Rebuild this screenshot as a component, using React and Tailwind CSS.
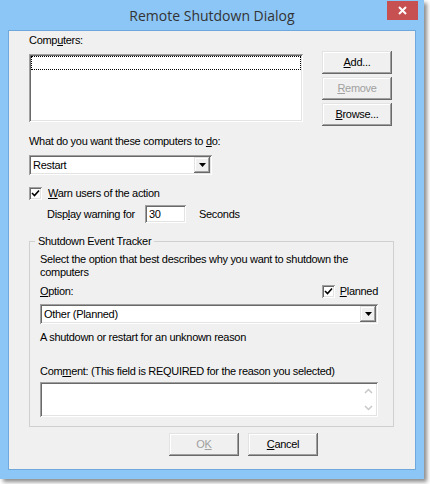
import React from "react";

const sunken =
  "shadow-[inset_1px_1px_#a0a0a0,inset_-1px_-1px_#ffffff,inset_2px_2px_#696969,inset_-2px_-2px_#e3e3e3]";
const raised =
  "shadow-[inset_-1px_-1px_#696969,inset_1px_1px_#e3e3e3,inset_-2px_-2px_#a0a0a0,inset_2px_2px_#ffffff]";

function U({ children }) {
  return <span className="underline underline-offset-[1px]">{children}</span>;
}

function Btn({ children, disabled }) {
  return (
    <div
      className={`flex h-[23px] w-[70px] items-center justify-center bg-[#f0f0f0] ${raised} ${
        disabled ? "text-[#a0a0a0]" : "text-black"
      }`}
    >
      {children}
    </div>
  );
}

function Check() {
  return (
    <div className={`flex h-[13px] w-[13px] items-center justify-center bg-white ${sunken}`}>
      <svg width="9" height="9" viewBox="0 0 9 9">
        <path d="M1 4 L3.5 6.5 L8 1.5" fill="none" stroke="#000" strokeWidth="1.6" />
      </svg>
    </div>
  );
}

function Combo({ value, className }) {
  return (
    <div className={`flex h-[20px] items-stretch bg-white p-[2px] ${sunken} ${className}`}>
      <div className="flex flex-1 items-center pl-[2px]">{value}</div>
      <div className={`flex w-[16px] items-center justify-center bg-[#f0f0f0] ${raised}`}>
        <svg width="7" height="4" viewBox="0 0 7 4">
          <path d="M0 0 H7 L3.5 4 Z" fill="#000" />
        </svg>
      </div>
    </div>
  );
}

export default function App() {
  return (
    <div className="min-h-screen bg-white">
      <div className="h-[479px] w-[424px] bg-[#8cc6f7] shadow-[3px_3px_4px_rgba(0,0,0,0.45)]">
        <div className="grid h-[30px] grid-cols-[1fr_auto_1fr] items-center">
          <div />
          <div className="font-['Open_Sans',sans-serif] text-[14px] text-[#333]">Remote Shutdown Dialog</div>
          <div className="flex justify-end self-start pr-[6px] pt-[1px]">
            <div className="flex h-[19px] w-[31px] items-center justify-center bg-[#c75050]">
              <svg width="9" height="9" viewBox="0 0 9 9">
                <path d="M1 1 L8 8 M8 1 L1 8" stroke="#fff" strokeWidth="2" />
              </svg>
            </div>
          </div>
        </div>

        <div className="mx-[8px] h-[440px] border border-[#6fa8dc] bg-[#f0f0f0] pl-[20px] pr-[21px] font-['Liberation_Sans',Arial,sans-serif] text-[11px] leading-[13px] tracking-[-0.3px] text-black">
          <div className="flex pt-[3px]">
            <div className="w-[274px]">
              <div>
                Comp<U>u</U>ters:
              </div>
              <div className={`mt-[7px] h-[68px] bg-white p-[2px] ${sunken}`}>
                <div className="h-[14px] border border-dotted border-black" />
              </div>
            </div>
            <div className="ml-[19px] mt-[17px] flex flex-col gap-[3px]">
              <Btn>
                <U>A</U>dd...
              </Btn>
              <Btn disabled>
                <U>R</U>emove
              </Btn>
              <Btn>
                <U>B</U>rowse...
              </Btn>
            </div>
          </div>

          <div className="mt-[9px]">
            What do you want these computers to <U>d</U>o:
          </div>
          <Combo value="Restart" className="mt-[7px] w-[183px]" />

          <div className="mt-[12px] flex items-center gap-[6px]">
            <Check />
            <div>
              <U>W</U>arn users of the action
            </div>
          </div>

          <div className="ml-[18px] mt-[5px] flex h-[18px] items-center">
            <div className="w-[98px]">
              Disp<U>l</U>ay warning for
            </div>
            <div className={`flex h-[18px] w-[41px] items-center bg-white pl-[4px] ${sunken}`}>30</div>
            <div className="ml-[13px]">Seconds</div>
          </div>

          <fieldset className="mt-[12px] border border-[#d0d0d0] pb-[9px] pl-[10px] pr-[15px]">
            <legend className="ml-[-5px] px-[3px]">Shutdown Event Tracker</legend>
            <div className="mt-[5px]">
              Select the option that best describes why you want to shutdown the
              <br />
              computers
            </div>
            <div className="mt-[6px] flex h-[13px] items-center justify-between">
              <div>
                <U>O</U>ption:
              </div>
              <div className="flex items-center gap-[5px]">
                <Check />
                <div>
                  <U>P</U>lanned
                </div>
              </div>
            </div>
            <Combo value="Other (Planned)" className="mt-[6px] w-full" />
            <div className="mt-[7px]">A shutdown or restart for an unknown reason</div>
            <div className="mt-[21px]">
              Com<U>m</U>ent: (This field is REQUIRED for the reason you selected)
            </div>
            <div className={`mt-[4px] flex h-[35px] bg-white p-[2px] ${sunken}`}>
              <div className="flex-1" />
              <div className="flex w-[16px] flex-col items-center justify-between py-[4px]">
                <svg width="9" height="6" viewBox="0 0 9 6">
                  <path d="M1 5 L4.5 1.5 L8 5" fill="none" stroke="#c8c8c8" strokeWidth="1.5" />
                </svg>
                <svg width="9" height="6" viewBox="0 0 9 6">
                  <path d="M1 1 L4.5 4.5 L8 1" fill="none" stroke="#c8c8c8" strokeWidth="1.5" />
                </svg>
              </div>
            </div>
          </fieldset>

          <div className="ml-[140px] mt-[6px] flex gap-[8px]">
            <div className="w-[71px]">
              <Btn disabled>
                O<U>K</U>
              </Btn>
            </div>
            <div className="w-[71px]">
              <Btn>
                <U>C</U>ancel
              </Btn>
            </div>
          </div>
        </div>
      </div>
    </div>
  );
}
